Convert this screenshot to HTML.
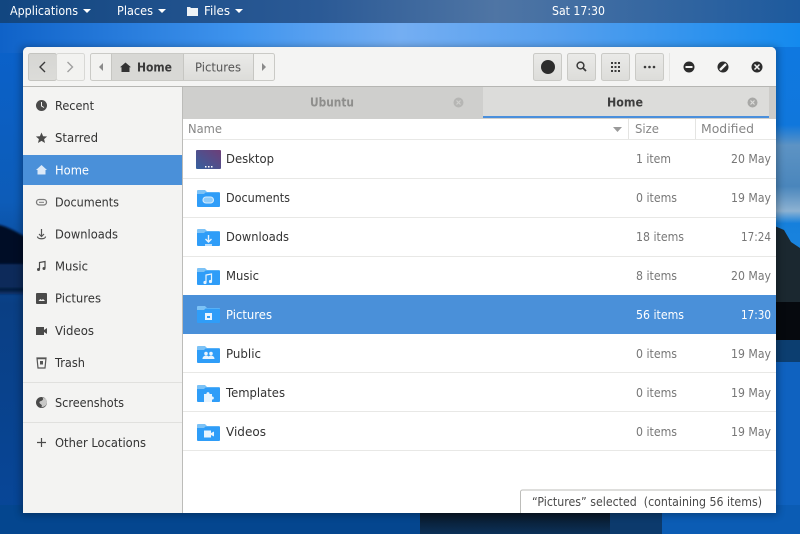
<!DOCTYPE html>
<html><head><meta charset="utf-8"><style>
html,body{margin:0;padding:0;background:#0a4a90;overflow:hidden}
svg{display:block;filter:blur(.35px)}
text{font-family:"DejaVu Sans",sans-serif;font-size:12.500px;fill:#333}
.b{font-weight:bold}
.w{fill:#fff}
.g{fill:#777}
.h{fill:#868686;font-size:12px}
</style></head><body>
<svg xmlns="http://www.w3.org/2000/svg" width="800" height="534" viewBox="0 0 800 534">
<defs>
<linearGradient id="lw" x1="0" y1="0" x2="0" y2="1"><stop offset="0" stop-color="#0a62cc"/><stop offset=".35" stop-color="#0d5cb8"/><stop offset=".55" stop-color="#0a3f84"/><stop offset="1" stop-color="#07479a"/></linearGradient>
<linearGradient id="top" x1="0" y1="0" x2="1" y2="0"><stop offset="0" stop-color="#0f62c8"/><stop offset=".3" stop-color="#3f94ee"/><stop offset=".5" stop-color="#74aef2"/><stop offset=".7" stop-color="#559fee"/><stop offset="1" stop-color="#148aee"/></linearGradient>
<linearGradient id="pan" x1="0" y1="0" x2="1" y2="0"><stop offset="0" stop-color="#124680"/><stop offset=".4" stop-color="#2b5a96"/><stop offset=".62" stop-color="#4f75a4"/><stop offset="1" stop-color="#1d5a9e"/></linearGradient>
<linearGradient id="btn" x1="0" y1="0" x2="0" y2="1"><stop offset="0" stop-color="#eaeae8"/><stop offset="1" stop-color="#dcdcd9"/></linearGradient>
<linearGradient id="act" x1="0" y1="0" x2="0" y2="1"><stop offset="0" stop-color="#d6d6d3"/><stop offset="1" stop-color="#dcdcd9"/></linearGradient>
<linearGradient id="dsk" x1="0" y1="1" x2="1" y2="0"><stop offset="0" stop-color="#35609f"/><stop offset="1" stop-color="#6e3e78"/></linearGradient>
<linearGradient id="bot" x1="0" y1="0" x2="0" y2="1"><stop offset="0" stop-color="#060b12"/><stop offset=".35" stop-color="#0a1a2c"/><stop offset="1" stop-color="#0b3058"/></linearGradient>
<linearGradient id="rc" x1="0" y1="0" x2="0" y2="1"><stop offset="0" stop-color="#0f78e0"/><stop offset=".38" stop-color="#1077dc"/><stop offset=".48" stop-color="#5d93c4"/><stop offset=".68" stop-color="#4a86bc"/><stop offset=".8" stop-color="#8db2d2"/><stop offset=".86" stop-color="#1680dc"/><stop offset="1" stop-color="#1a84de"/></linearGradient>
<filter id="bl1" x="-30%" y="-30%" width="160%" height="160%"><feGaussianBlur stdDeviation="1"/></filter>
<filter id="sh" x="-5%" y="-5%" width="110%" height="110%"><feGaussianBlur stdDeviation="4"/></filter>
<g id="folder">
<path d="M0 2a1 1 0 0 1 1-1h7l2 2h12a1 1 0 0 1 1 1v3H0z" fill="#7cc2f6"/>
<path d="M0 5h7l1.500-1.500H22a1 1 0 0 1 1 1V17a1 1 0 0 1-1 1H1a1 1 0 0 1-1-1z" fill="#2f9df8"/>
</g>
</defs>

<!-- wallpaper -->
<rect width="800" height="534" fill="#0f6cd2"/>
<rect x="0" y="23" width="30" height="511" fill="url(#lw)"/>
<rect x="0" y="23" width="800" height="30" fill="url(#top)"/>
<path d="M-5 224C8 226 16 232 28 238V266H-5z" fill="#050f26" filter="url(#bl1)"/>
<rect x="-5" y="264" width="33" height="30" fill="#08295a" filter="url(#bl1)"/>
<rect x="-5" y="288" width="33" height="3" fill="#051a3c" filter="url(#bl1)"/>
<!-- right scene -->
<rect x="770" y="47" width="30" height="205" fill="url(#rc)"/>
<path d="M770 224l14 6 7 12 9 6v90h-30z" fill="#1b2830"/>
<rect x="770" y="302" width="30" height="38" fill="#06090e"/>
<rect x="770" y="340" width="30" height="24" fill="#0c3e70"/>
<rect x="770" y="362" width="30" height="172" fill="#0f62c0"/>
<!-- bottom -->
<rect x="0" y="505" width="425" height="29" fill="#04468f"/>
<rect x="420" y="505" width="195" height="29" fill="url(#bot)"/>
<rect x="610" y="505" width="55" height="29" fill="#0c3a6c"/>
<rect x="662" y="505" width="138" height="29" fill="#0b5cb4"/>
<!-- panel -->
<rect width="800" height="23" fill="url(#pan)"/>
<text class="w" x="10" y="15" textLength="68" lengthAdjust="spacingAndGlyphs">Applications</text>
<path d="M83 9h8l-4 4z" fill="#fff"/>
<text class="w" x="117" y="15" textLength="36" lengthAdjust="spacingAndGlyphs">Places</text>
<path d="M158 9h8l-4 4z" fill="#fff"/>
<path d="M187 7h3l1 1h7v8h-11z" fill="#eef2f6"/>
<text class="w" x="204" y="15" textLength="26" lengthAdjust="spacingAndGlyphs">Files</text>
<path d="M235 9h8l-4 4z" fill="#fff"/>
<text class="w" x="552" y="15" textLength="53" lengthAdjust="spacingAndGlyphs">Sat 17:30</text>

<!-- window -->
<rect x="21" y="47" width="757" height="468" fill="#000" opacity=".3" filter="url(#sh)"/>
<path d="M23 52a5 5 0 0 1 5-5H771a5 5 0 0 1 5 5V513H23z" fill="#fff"/>
<path d="M23 52a5 5 0 0 1 5-5H771a5 5 0 0 1 5 5V86H23z" fill="#f4f4f3"/>
<rect x="23" y="86" width="753" height="1" fill="#b6b6b3"/>

<!-- nav buttons -->
<rect x="28.500" y="53.500" width="28" height="27" rx="2" fill="url(#act)" stroke="#c4c4c0"/>
<rect x="56.500" y="53.500" width="28" height="27" rx="2" fill="#f2f2f0" stroke="#d8d8d5"/>
<path d="M45 62l-5 5 5 5" fill="none" stroke="#3a3a3a" stroke-width="1.400"/>
<path d="M67.500 62l5 5-5 5" fill="none" stroke="#a0a0a0" stroke-width="1.400"/>

<!-- breadcrumb -->
<rect x="90.500" y="53.500" width="184" height="27" rx="2" fill="#f2f2f0" stroke="#cacac6"/>
<rect x="111" y="54" width="72" height="26" fill="#d8d8d5"/>
<rect x="183" y="54" width="70" height="26" fill="url(#btn)"/>
<path d="M111.500 54v26M183.500 54v26M253.500 54v26" stroke="#c6c6c2"/>
<path d="M103 63v8l-4-4z" fill="#8a8a8a"/>
<path d="M262 63v8l4-4z" fill="#8a8a8a"/>
<path d="M125.500 62.500l5.500 4.800h-1.500V72h-8v-4.700H120z" fill="#333"/>
<text class="b" x="137" y="71.500" textLength="35" lengthAdjust="spacingAndGlyphs" style="fill:#3a3a3a">Home</text>
<text x="195" y="71.500" textLength="46" lengthAdjust="spacingAndGlyphs" style="fill:#555">Pictures</text>

<!-- right buttons -->
<g fill="url(#btn)" stroke="#cacac6">
<rect x="533.500" y="53.500" width="28" height="27" rx="2"/>
<rect x="567.500" y="53.500" width="28" height="27" rx="2"/>
<rect x="601.500" y="53.500" width="28" height="27" rx="2"/>
<rect x="635.500" y="53.500" width="28" height="27" rx="2"/>
</g>
<circle cx="548" cy="67" r="7" fill="#2c2c2c"/>
<circle cx="580.500" cy="65.500" r="3.400" fill="none" stroke="#3a3a3a" stroke-width="1.500"/>
<path d="M583 68l3 3" stroke="#3a3a3a" stroke-width="1.800"/>
<g fill="#3a3a3a">
<rect x="611" y="62" width="2" height="2"/><rect x="614.500" y="62" width="2" height="2"/><rect x="618" y="62" width="2" height="2"/>
<rect x="611" y="66" width="2" height="2"/><rect x="614.500" y="66" width="2" height="2"/><rect x="618" y="66" width="2" height="2"/>
<rect x="611" y="70" width="2" height="2"/><rect x="614.500" y="70" width="2" height="2"/><rect x="618" y="70" width="2" height="2"/>
<circle cx="645" cy="67" r="1.300"/><circle cx="649.500" cy="67" r="1.300"/><circle cx="654" cy="67" r="1.300"/>
</g>
<rect x="669" y="53" width="1" height="28" fill="#e4e4e2"/>
<circle cx="689" cy="67" r="5.500" fill="#2c2c2c"/><rect x="685.500" y="66" width="7" height="2" fill="#f4f4f3"/>
<circle cx="723" cy="67" r="5.500" fill="#2c2c2c"/><path d="M720 70l6-6" stroke="#f4f4f3" stroke-width="2.400"/>
<circle cx="757" cy="67" r="5.500" fill="#2c2c2c"/><path d="M754.500 64.500l5 5M759.500 64.500l-5 5" stroke="#f4f4f3" stroke-width="1.500"/>

<!-- sidebar -->
<rect x="23" y="87" width="159" height="426" fill="#f3f3f2"/>
<rect x="182" y="87" width="1" height="426" fill="#bcbcb9"/>
<rect x="23" y="155" width="159" height="30" fill="#4a90d9"/>
<rect x="23" y="382" width="159" height="1" fill="#e0e0de"/>
<rect x="23" y="422" width="159" height="1" fill="#e0e0de"/>

<circle cx="41.500" cy="105.500" r="5.500" fill="#4a4a4a"/><path d="M41.500 102v4l2.500 1.500" fill="none" stroke="#f3f3f2" stroke-width="1"/>
<text x="55" y="110" textLength="39" lengthAdjust="spacingAndGlyphs">Recent</text>
<path d="M41.500 132.500l1.600 3.700 4 .3-3 2.600.9 3.900-3.500-2.100-3.500 2.100.9-3.900-3-2.600 4-.3z" fill="#4a4a4a"/>
<text x="55" y="142" textLength="43" lengthAdjust="spacingAndGlyphs">Starred</text>
<path d="M41.500 165l5.500 5h-1.500v4.500h-8V170H36z" fill="#dbe9f8"/>
<text class="w" x="55" y="174.500" textLength="34" lengthAdjust="spacingAndGlyphs">Home</text>
<rect x="36.500" y="199.500" width="10" height="5.500" rx="2.700" fill="none" stroke="#7a7a7a" stroke-width="1.300"/><path d="M39 202.300h5" stroke="#7a7a7a"/>
<text x="55" y="206.500" textLength="64" lengthAdjust="spacingAndGlyphs">Documents</text>
<path d="M41.500 229v7M39 234l2.500 2.500L44 234M37.500 236.500c0 3 8 3 8 0" fill="none" stroke="#555" stroke-width="1.200"/>
<text x="55" y="238.500" textLength="63" lengthAdjust="spacingAndGlyphs">Downloads</text>
<path d="M39.500 269v-6.500l5.500-1v6.500" fill="none" stroke="#4a4a4a" stroke-width="1.200"/><circle cx="38.500" cy="269.500" r="1.500" fill="#4a4a4a"/><circle cx="44" cy="268.500" r="1.500" fill="#4a4a4a"/>
<text x="55" y="270.500" textLength="33" lengthAdjust="spacingAndGlyphs">Music</text>
<rect x="36" y="293" width="11" height="11" rx="1" fill="#4a4a4a"/><path d="M38.500 301l1.800-2 1.500 1 1.200-1 2 2z" fill="#f3f3f2"/>
<text x="55" y="302.500" textLength="46" lengthAdjust="spacingAndGlyphs">Pictures</text>
<path d="M36 327h8v8h-8zM44 330l3-2v6l-3-2z" fill="#4a4a4a"/>
<text x="55" y="335" textLength="39" lengthAdjust="spacingAndGlyphs">Videos</text>
<path d="M37 358h9l-1 10h-7z" fill="none" stroke="#555" stroke-width="1.200"/><path d="M36.500 358.500h10" stroke="#555" stroke-width="1.500"/><rect x="40" y="361" width="3" height="3.500" fill="#555"/>
<text x="55" y="367" textLength="30" lengthAdjust="spacingAndGlyphs">Trash</text>
<circle cx="41.500" cy="402.500" r="5.500" fill="#4a4a4a"/><path d="M42 397.500c2 1 1 3-1 3.500s-2 2-.5 3 2 2 .5 3.300c3 0 6-2 6-5s-2-4.500-5-4.800z" fill="#f3f3f2" opacity=".75"/>
<text x="55" y="407" textLength="69" lengthAdjust="spacingAndGlyphs">Screenshots</text>
<path d="M41.500 438v9M37 442.500h9" stroke="#4a4a4a" stroke-width="1.200"/>
<text x="55" y="447" textLength="91" lengthAdjust="spacingAndGlyphs">Other Locations</text>

<!-- tabs -->
<rect x="183" y="87" width="593" height="32" fill="#cfcfcd"/>
<rect x="483" y="87" width="286" height="31" fill="#dcdcda"/>
<rect x="483" y="116" width="286" height="2" fill="#4a8fdc"/>
<rect x="769" y="87" width="7" height="32" fill="#cdccc9"/>
<text class="b" x="310" y="106.500" textLength="44" lengthAdjust="spacingAndGlyphs" style="fill:#8e8e8c">Ubuntu</text>
<text class="b" x="607" y="106.500" textLength="36" lengthAdjust="spacingAndGlyphs" style="fill:#3e3e3e">Home</text>
<circle cx="458.500" cy="102.500" r="5" fill="#b6b6b4"/><path d="M456.500 100.500l4 4M460.500 100.500l-4 4" stroke="#cfcfcd" stroke-width="1.200"/>
<circle cx="752.500" cy="102.500" r="5" fill="#a8a8a6"/><path d="M750.500 100.500l4 4M754.500 100.500l-4 4" stroke="#dcdcda" stroke-width="1.200"/>

<!-- column headers -->
<rect x="183" y="119" width="593" height="20" fill="#fff"/>
<text class="h" x="188" y="133" textLength="34" lengthAdjust="spacingAndGlyphs">Name</text>
<path d="M613 127h9l-4.500 5z" fill="#9a9a9a"/>
<text class="h" x="635" y="133" textLength="24" lengthAdjust="spacingAndGlyphs">Size</text>
<text class="h" x="701" y="133" textLength="53" lengthAdjust="spacingAndGlyphs">Modified</text>
<rect x="628" y="119" width="1" height="20" fill="#e4e4e2"/>
<rect x="695" y="119" width="1" height="20" fill="#e4e4e2"/>

<!-- rows -->
<g fill="#e8e8e6">
<rect x="183" y="139" width="593" height="1"/>
<rect x="183" y="178" width="593" height="1"/>
<rect x="183" y="217" width="593" height="1"/>
<rect x="183" y="256" width="593" height="1"/>
<rect x="183" y="372" width="593" height="1"/>
<rect x="183" y="411" width="593" height="1"/>
<rect x="183" y="450" width="593" height="1"/>
</g>
<rect x="183" y="295" width="593" height="39" fill="#4a90d9"/>

<rect x="196" y="150" width="25" height="19" rx="1" fill="url(#dsk)"/>
<path d="M205 166h1.500v1.500H205zM208 166h1.500v1.500H208zM211 166h1.500v1.500H211z" fill="#fff"/>
<use href="#folder" x="197" y="189"/>
<rect x="203" y="197" width="10.500" height="6" rx="3" fill="#8fccfa" stroke="#d6ecfd" stroke-width="1.100"/>
<use href="#folder" x="197" y="228"/>
<path d="M208.500 235v6.500M205.500 239l3 3 3-3M205 245h7" fill="none" stroke="#e8f4fe" stroke-width="1.400"/>
<use href="#folder" x="197" y="267"/>
<path d="M206 282v-7l5.500-1v7" fill="none" stroke="#e8f4fe" stroke-width="1.200"/><circle cx="205" cy="282.500" r="1.600" fill="#e8f4fe"/><circle cx="210.500" cy="281.500" r="1.600" fill="#e8f4fe"/>
<use href="#folder" x="197" y="305"/>
<rect x="205" y="313" width="7" height="7" fill="#e8f4fe"/><rect x="207" y="316" width="3" height="2" fill="#2f9df8"/>
<use href="#folder" x="197" y="345"/>
<circle cx="206" cy="353.500" r="1.800" fill="#e8f4fe"/><circle cx="211" cy="353.500" r="1.800" fill="#e8f4fe"/><path d="M202.500 359c0-2.500 2-3.500 3.500-3.500s2.500.5 2.500 1 1-1 2.500-1 3.500 1 3.500 3.500z" fill="#e8f4fe"/>
<use href="#folder" x="197" y="384"/>
<path d="M204 394h2.500c-.5-2.500 3.500-2.500 3 0h2.500v2.500c2.500-.5 2.500 3.500 0 3v2.500h-8z" fill="#e8f4fe"/>
<use href="#folder" x="197" y="423"/>
<path d="M204 430.500h7v7h-7zM211 433l3-1.500v5l-3-1.500z" fill="#e8f4fe"/>

<g>
<text x="226" y="163" textLength="48" lengthAdjust="spacingAndGlyphs">Desktop</text>
<text x="226" y="202" textLength="64" lengthAdjust="spacingAndGlyphs">Documents</text>
<text x="226" y="241" textLength="63" lengthAdjust="spacingAndGlyphs">Downloads</text>
<text x="226" y="280" textLength="33" lengthAdjust="spacingAndGlyphs">Music</text>
<text class="w" x="226" y="319" textLength="46" lengthAdjust="spacingAndGlyphs">Pictures</text>
<text x="226" y="358" textLength="35" lengthAdjust="spacingAndGlyphs">Public</text>
<text x="226" y="397" textLength="59" lengthAdjust="spacingAndGlyphs">Templates</text>
<text x="226" y="436" textLength="40" lengthAdjust="spacingAndGlyphs">Videos</text>
</g>
<g>
<text class="g" x="636" y="163" textLength="35" lengthAdjust="spacingAndGlyphs">1 item</text>
<text class="g" x="636" y="202" textLength="41" lengthAdjust="spacingAndGlyphs">0 items</text>
<text class="g" x="636" y="241" textLength="48" lengthAdjust="spacingAndGlyphs">18 items</text>
<text class="g" x="636" y="280" textLength="41" lengthAdjust="spacingAndGlyphs">8 items</text>
<text class="w" x="636" y="319" textLength="48" lengthAdjust="spacingAndGlyphs">56 items</text>
<text class="g" x="636" y="358" textLength="41" lengthAdjust="spacingAndGlyphs">0 items</text>
<text class="g" x="636" y="397" textLength="41" lengthAdjust="spacingAndGlyphs">0 items</text>
<text class="g" x="636" y="436" textLength="41" lengthAdjust="spacingAndGlyphs">0 items</text>
</g>
<g>
<text class="g" x="731" y="163" textLength="40" lengthAdjust="spacingAndGlyphs">20 May</text>
<text class="g" x="731" y="202" textLength="40" lengthAdjust="spacingAndGlyphs">19 May</text>
<text class="g" x="741" y="241" textLength="30" lengthAdjust="spacingAndGlyphs">17:24</text>
<text class="g" x="731" y="280" textLength="40" lengthAdjust="spacingAndGlyphs">20 May</text>
<text class="w" x="741" y="319" textLength="30" lengthAdjust="spacingAndGlyphs">17:30</text>
<text class="g" x="731" y="358" textLength="40" lengthAdjust="spacingAndGlyphs">19 May</text>
<text class="g" x="731" y="397" textLength="40" lengthAdjust="spacingAndGlyphs">19 May</text>
<text class="g" x="731" y="436" textLength="40" lengthAdjust="spacingAndGlyphs">19 May</text>
</g>

<!-- status -->
<path d="M520.500 513v-21a2 2 0 0 1 2-2H776" fill="#fff" stroke="#bdbdba"/>
<text x="532" y="506" textLength="230" lengthAdjust="spacingAndGlyphs" style="fill:#4a4a4a">“Pictures” selected&#160; (containing 56 items)</text>
</svg>
</body></html>
